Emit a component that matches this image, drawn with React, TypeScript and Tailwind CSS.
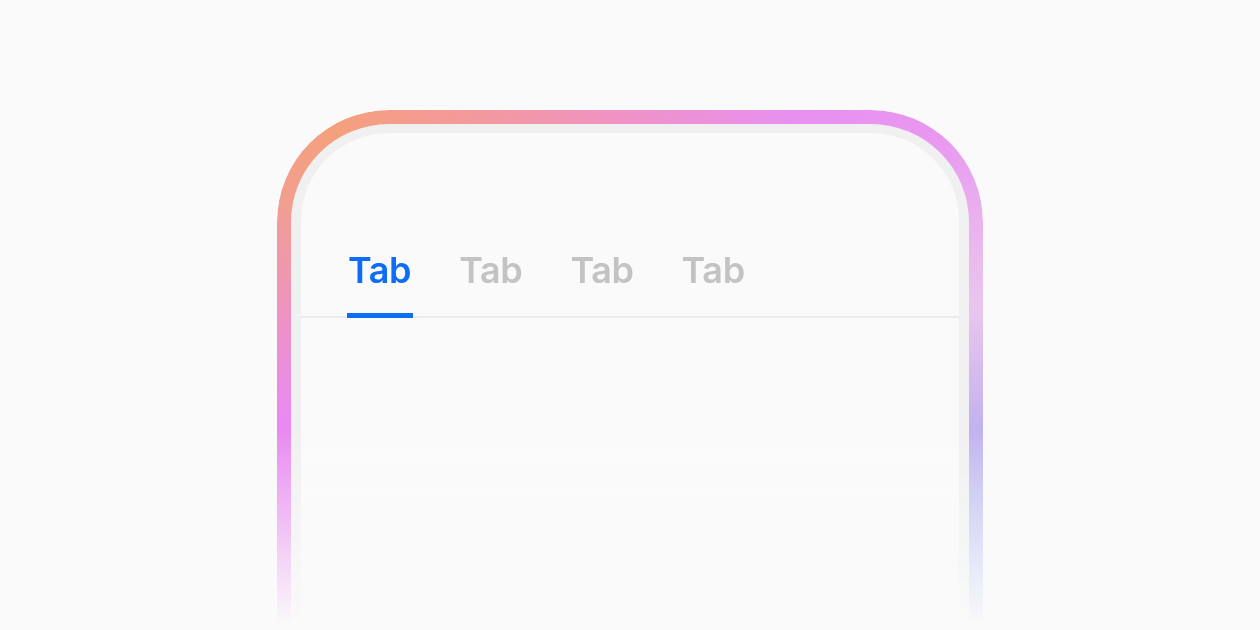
const tabs = ["Tab", "Tab", "Tab", "Tab"];

export default function App() {
  const active = 0;

  return (
    <div className="flex h-[630px] justify-center overflow-hidden bg-[#fafafa] pt-[110px] font-['Inter',sans-serif]">
      <div className="h-[560px] w-[706px] shrink-0 rounded-t-[112px] bg-[conic-gradient(from_0deg_at_353px_290px,#ee92c8_0deg,#e890f0_30deg,#e898f0_50deg,#eab4ee_64deg,#e9c6ee_75deg,#c2b2ee_95deg,#b8c2f2_115deg,#b4c8f4_140deg,#e888f2_230deg,#e98af0_268deg,#ee94bc_286deg,#f29e90_300deg,#f5a07c_312deg,#f298a2_334deg,#ee92c8_360deg)] px-[14px] pt-[14px] [mask-image:linear-gradient(to_bottom,black_320px,transparent_515px)]">
        <div className="h-full rounded-t-[98px] bg-[#f0f0f0] px-[10px] pt-[9px]">
          <div className="h-full rounded-t-[88px] bg-[#fafafa] pt-[119px]">
            <div className="flex gap-[48px] border-b-2 border-[#ebebeb] px-[47px]">
              {tabs.map((label, i) => (
                <div key={i} className="relative pb-[28px]">
                  <span
                    className={`block text-[36px] leading-none font-semibold tracking-[-0.01em] ${
                      i === active ? "text-[#0d6ef5]" : "text-[#c3c3c3]"
                    }`}
                  >
                    {label}
                  </span>
                  {i === active && (
                    <div className="absolute -right-[2px] -bottom-[2px] -left-[1px] h-[5px] bg-[#0d6ef5]" />
                  )}
                </div>
              ))}
            </div>
          </div>
        </div>
      </div>
    </div>
  );
}
